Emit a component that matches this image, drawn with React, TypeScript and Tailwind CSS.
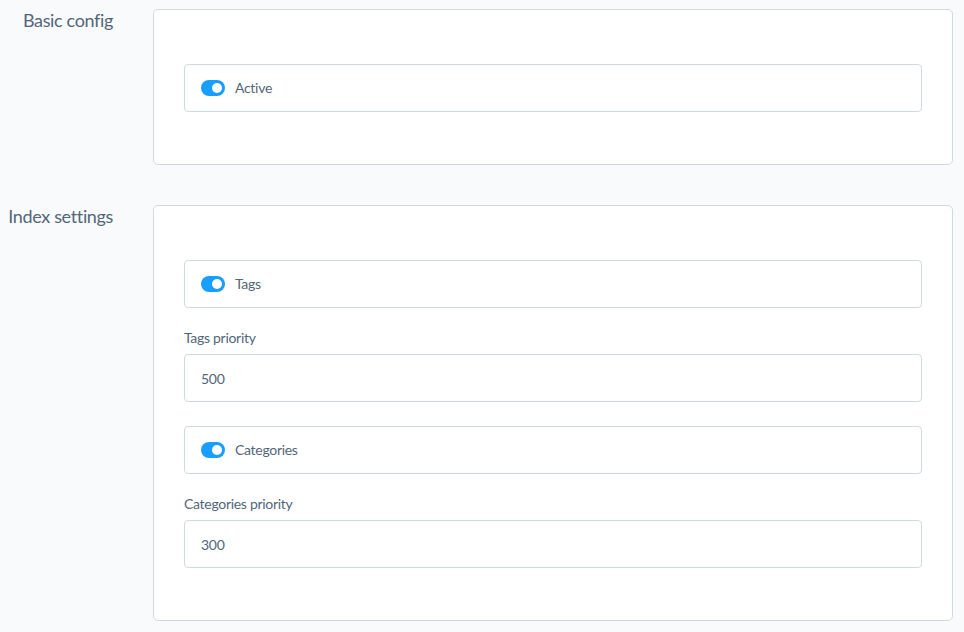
import React from 'react';

const SwitchField: React.FC<{ label: string }> = ({ label }) => (
  <div className="flex h-12 items-center rounded border border-[#d1d9e0] bg-white px-4">
    <span className="relative block h-4 w-6 rounded-full bg-[#189eff]">
      <span className="absolute right-[3px] top-[3px] h-2.5 w-2.5 rounded-full bg-white" />
    </span>
    <span className="ml-2.5 -mt-px text-[14px] tracking-[-0.3px] text-[#52667a]">{label}</span>
  </div>
);

const NumberField: React.FC<{ label: string; value: string }> = ({ label, value }) => (
  <div>
    <div className="mb-1.5 text-[14px] leading-5 tracking-[-0.3px] text-[#52667a]">{label}</div>
    <div className="flex h-12 items-center rounded border border-[#d1d9e0] bg-white px-4 text-[14px] tracking-[-0.3px] text-[#52667a]">
      {value}
    </div>
  </div>
);

const Section: React.FC<{ title: string; children: React.ReactNode }> = ({ title, children }) => (
  <div className="flex gap-10">
    <h2 className="w-[113px] shrink-0 text-right text-[18px] leading-[22px] tracking-[-0.35px] text-[#52667a]">
      {title}
    </h2>
    <div className="w-[800px] rounded-[5px] border border-[#d1d9e0] bg-white px-[30px] pb-[52px] pt-[54px]">
      {children}
    </div>
  </div>
);

export default function App() {
  return (
    <div
      className="min-h-screen bg-[#f9fafb] pt-[9px]"
      style={{ fontFamily: '"Lato", "Noto Sans", sans-serif' }}
    >
      <div className="flex flex-col gap-10">
        <Section title="Basic config">
          <SwitchField label="Active" />
        </Section>
        <Section title="Index settings">
          <div className="flex flex-col">
            <SwitchField label="Tags" />
            <div className="mt-5">
              <NumberField label="Tags priority" value="500" />
            </div>
            <div className="mt-6">
              <SwitchField label="Categories" />
            </div>
            <div className="mt-5">
              <NumberField label="Categories priority" value="300" />
            </div>
          </div>
        </Section>
      </div>
    </div>
  );
}
